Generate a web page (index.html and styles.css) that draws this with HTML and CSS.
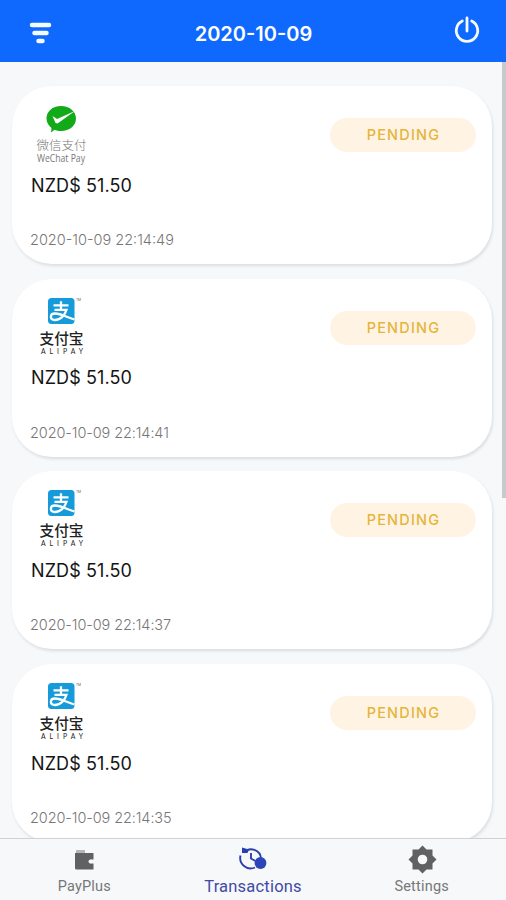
FILE: index.html
```html
<!DOCTYPE html>
<html lang="en">
<head>
<meta charset="utf-8">
<title>Transactions</title>
<link rel="stylesheet" href="styles.css">
</head>
<body>
<svg class="defs" width="0" height="0">
  <symbol id="alipay" viewBox="0 0 60 62" overflow="visible">
    <rect x="18" y="3" width="26.500" height="26" rx="3.500" fill="#159bd9"/>
    <g fill="none" stroke="#fff" stroke-width="2.300">
      <path d="M23.5 10.3H38.5M31 6.3V15M24.5 14.8H36.5C35 20 30.5 25 25 25C19.500 25 19.500 18.500 25 18.500C31 18.500 36 22 44.500 24.500" />
    </g>
    <text class="tm" x="46" y="5.500" textLength="5" lengthAdjust="spacingAndGlyphs">TM</text>
    <text class="ali-cn" x="9.500" y="49.300" textLength="44" lengthAdjust="spacingAndGlyphs">支付宝</text>
    <text class="ali-en" x="11" y="58.700" textLength="42">ALIPAY</text>
  </symbol>
</svg>
<div class="app">
  <header class="bar">
    <svg class="filter" viewBox="0 0 24 24"><path d="M4 3H21M6.500 11H18.500M10.500 19H14.500"/></svg>
    <h1>2020-10-09</h1>
    <svg class="power" viewBox="0 0 26 28"><path d="M13 3V16M8.300 6A10.700 10.700 0 1 0 17.700 6"/></svg>
  </header>
  <main class="list">
    <article class="card">
      <div class="info">
        <svg class="logo" viewBox="0 0 60 62">
          <path fill="#12aa18" d="M31 4C39.500 4 46 9.500 46 16.500S39.500 29 31 29C28.500 29 26.500 28.500 24.500 27.700L21 30.500L21.500 26C18.500 23.500 16.500 20.500 16.500 16.500C16.500 9.500 22.500 4 31 4Z"/>
          <path fill="#fff" d="M22.500 14L27 17L45 9L27.500 21.500L25.500 21Z"/>
          <text class="wx-cn" x="6.500" y="48" textLength="50" lengthAdjust="spacingAndGlyphs">微信支付</text>
          <text class="wx-en" x="7" y="59.500" textLength="48" lengthAdjust="spacingAndGlyphs">WeChat Pay</text>
        </svg>
        <p class="amount">NZD$ 51.50</p>
        <time>2020-10-09 22:14:49</time>
      </div>
      <span class="badge">PENDING</span>
    </article>
    <article class="card">
      <div class="info">
        <svg class="logo"><use href="#alipay"/></svg>
        <p class="amount">NZD$ 51.50</p>
        <time class="narrow">2020-10-09 22:14:41</time>
      </div>
      <span class="badge">PENDING</span>
    </article>
    <article class="card">
      <div class="info">
        <svg class="logo"><use href="#alipay"/></svg>
        <p class="amount">NZD$ 51.50</p>
        <time class="narrow">2020-10-09 22:14:37</time>
      </div>
      <span class="badge">PENDING</span>
    </article>
    <article class="card">
      <div class="info">
        <svg class="logo"><use href="#alipay"/></svg>
        <p class="amount">NZD$ 51.50</p>
        <time class="narrow">2020-10-09 22:14:35</time>
      </div>
      <span class="badge">PENDING</span>
    </article>
    <div class="scrollbar"></div>
  </main>
  <nav class="tabs">
    <a class="tab">
      <svg viewBox="0 0 30 30"><path fill="#b4b6b8" d="M7 5H16V9H7Z"/><path fill="#5f6163" fill-rule="evenodd" d="M6 8H24.500V24.500H7.500Q6 24.500 6 23Z"/><circle cx="21.500" cy="16.500" r="2" fill="#f6f8fa"/><path fill="#f6f8fa" d="M21.500 14.500H25V18.500H21.500Z"/></svg>
      <span>PayPlus</span>
    </a>
    <a class="tab active">
      <svg viewBox="0 0 30 30"><g fill="none" stroke="#2c3fae" stroke-width="1.900"><path d="M6 7.500A9.800 9.800 0 0 1 23 13.500M2.500 10.500A10.500 10.500 0 0 0 17 22.500M13 8V13.500L17.500 16"/></g><path fill="#2c3fae" d="M4 2.500L11 4.500L9.500 8H4Z"/><circle cx="22.500" cy="18" r="5.900" fill="#2c46b8"/></svg>
      <span>Transactions</span>
    </a>
    <a class="tab">
      <svg viewBox="0 0 30 30"><path fill="#5f6163" fill-rule="evenodd" d="M15.500 .5L19.500 4.500H25.500V10.500L29.500 14.500L25.500 18.500V24.500H19.500L15.500 28.500L11.500 24.500H5.500V18.500L1.500 14.500L5.500 10.500V4.500H11.500ZM15.500 9.700A4.800 4.800 0 1 0 15.500 19.300A4.800 4.800 0 1 0 15.500 9.700Z"/></svg>
      <span>Settings</span>
    </a>
  </nav>
</div>
</body>
</html>
```

FILE: styles.css
```css
* { box-sizing: border-box; }
body { margin: 0; font-family: Inter, "Liberation Sans", sans-serif; }
.defs { position: absolute; }
.app { width: 506px; height: 900px; display: flex; flex-direction: column; overflow: hidden; background: #f6f8fa; }
.bar { height: 62px; flex: none; display: flex; align-items: center; justify-content: space-between; padding: 5px 25px 0 28px; background: #0f69ff; color: #fff; }
.bar h1 { margin: 0; padding-left: 2px; font-size: 20px; font-weight: 600; line-height: 28px; letter-spacing: 0; }
.bar svg { fill: none; stroke: #f4fbff; stroke-linecap: round; }
.filter { width: 24px; height: 24px; stroke-width: 4.5; }
.power { width: 28px; height: 28px; stroke-width: 2.8; margin-top: -9px; }
.list { position: relative; flex: 1; min-height: 0; overflow: hidden; display: flex; flex-direction: column; gap: 14.7px; padding: 24px 14px 0 12px; }
.card { flex: none; height: 178px; border-radius: 40px; background: #fff; box-shadow: 1px 2px 3px rgba(65, 80, 80, .15); display: flex; justify-content: space-between; align-items: flex-start; padding: 16px 16px 0 18px; }
.info { display: flex; flex-direction: column; }
.logo { width: 60px; height: 62px; display: block; overflow: visible; }
.amount { margin: 9.500px 0 0; padding-left: 1px; font-size: 18px; line-height: 24px; letter-spacing: .1px; color: #151515; }
time { margin-top: 32.500px; font-size: 14.500px; line-height: 20px; font-weight: 300; color: #777; }
.narrow { letter-spacing: -.1px; }
.badge { width: 146px; height: 34px; margin-top: 16px; border-radius: 17px; background: #fff4e4; color: #e6b43b; font-size: 14.500px; font-weight: 500; line-height: 34px; letter-spacing: 1.200px; text-indent: 1px; text-align: center; }
.tm { font: 4px Inter, sans-serif; fill: #555; }
.ali-cn { font: 500 15px "Noto Sans CJK SC", sans-serif; fill: #222; }
.ali-en { font: 6.800px Lato, sans-serif; fill: #222; }
.wx-cn { font: 300 12.500px "Noto Sans CJK SC", sans-serif; fill: #777; }
.wx-en { font: 10px "Open Sans", sans-serif; fill: #777; }
.scrollbar { position: absolute; top: 0; right: 0; width: 4px; height: 436px; background: #c7cacc; }
.tabs { flex: none; height: 62px; border-top: 1px solid #cfd1d3; background: #f6f8fa; display: grid; grid-template-columns: repeat(3, 1fr); font-family: Roboto, sans-serif; font-size: 14.500px; color: #777; }
.tab { display: flex; flex-direction: column; align-items: center; padding-top: 6px; }
.tab svg { width: 30px; height: 30px; }
.tab span { line-height: 20px; margin-top: 2px; letter-spacing: .2px; }
.active { color: #414aa5; font-size: 16.500px; }
```
